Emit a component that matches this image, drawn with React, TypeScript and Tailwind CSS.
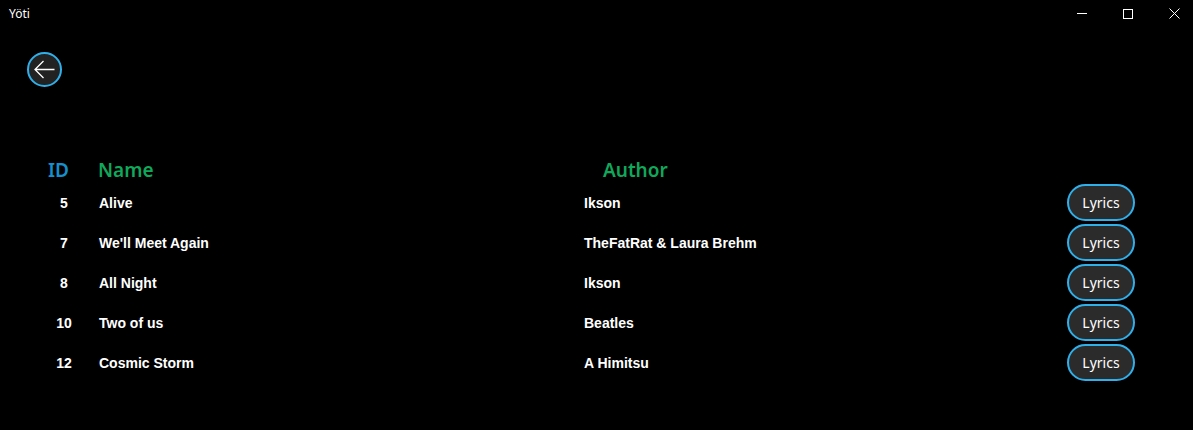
interface Song {
  id: number;
  name: string;
  author: string;
}

const songs: Song[] = [
  { id: 5, name: 'Alive', author: 'Ikson' },
  { id: 7, name: "We'll Meet Again", author: 'TheFatRat & Laura Brehm' },
  { id: 8, name: 'All Night', author: 'Ikson' },
  { id: 10, name: 'Two of us', author: 'Beatles' },
  { id: 12, name: 'Cosmic Storm', author: 'A Himitsu' },
];

function TitleBar() {
  return (
    <div className="flex h-[27px] items-center justify-between">
      <span className="pl-[9px] text-[12px] text-white font-['Noto_Sans',sans-serif]">Yöti</span>
      <div className="mr-[-4px] flex h-full">
        <div className="flex w-[46px] items-center justify-center">
          <div className="h-px w-[10px] bg-white" />
        </div>
        <div className="flex w-[46px] items-center justify-center">
          <div className="h-[10px] w-[10px] border border-white" />
        </div>
        <div className="flex w-[46px] items-center justify-center">
          <svg width="11" height="11" viewBox="0 0 11 11" stroke="white" strokeWidth="1">
            <path d="M0.5 0.5 L10.5 10.5 M10.5 0.5 L0.5 10.5" />
          </svg>
        </div>
      </div>
    </div>
  );
}

export default function App() {
  return (
    <div className="h-[430px] w-[1193px] bg-black text-white">
      <TitleBar />

      <div className="pl-[27px] pt-[25px]">
        <button className="flex h-[35px] w-[35px] items-center justify-center rounded-full border-2 border-[#2fb0ea] bg-[#222222]">
          <svg width="21" height="19" viewBox="0 0 21 19" fill="none" stroke="white" strokeWidth="1.3">
            <path d="M1 9.5 H20.5 M9.5 1 L1 9.5 L9.5 18" />
          </svg>
        </button>
      </div>

      <div className="mt-[71px] flex h-[24px] items-center pl-[48px] text-[19px] font-semibold font-['Noto_Sans',sans-serif] leading-none">
        <span className="w-[50px] text-[#1590cc]">ID</span>
        <span className="w-[505px] text-[#10a85b]">Name</span>
        <span className="text-[#10a85b]">Author</span>
      </div>

      <div>
        {songs.map((song) => (
          <div key={song.id} className="flex h-[40px] items-center pl-[48px] font-['Liberation_Sans',sans-serif] text-[14px] font-bold">
            <span className="w-[32px] pt-[2px] text-center">{song.id}</span>
            <span className="w-[504px] pl-[19px] pt-[2px]">{song.name}</span>
            <span className="w-[483px] pt-[2px]">{song.author}</span>
            <button className="h-[37px] w-[68px] rounded-full border-2 border-[#2fb0ea] bg-[#2b2b2b] text-[14px] font-normal font-['Noto_Sans',sans-serif] text-white">
              Lyrics
            </button>
          </div>
        ))}
      </div>
    </div>
  );
}
